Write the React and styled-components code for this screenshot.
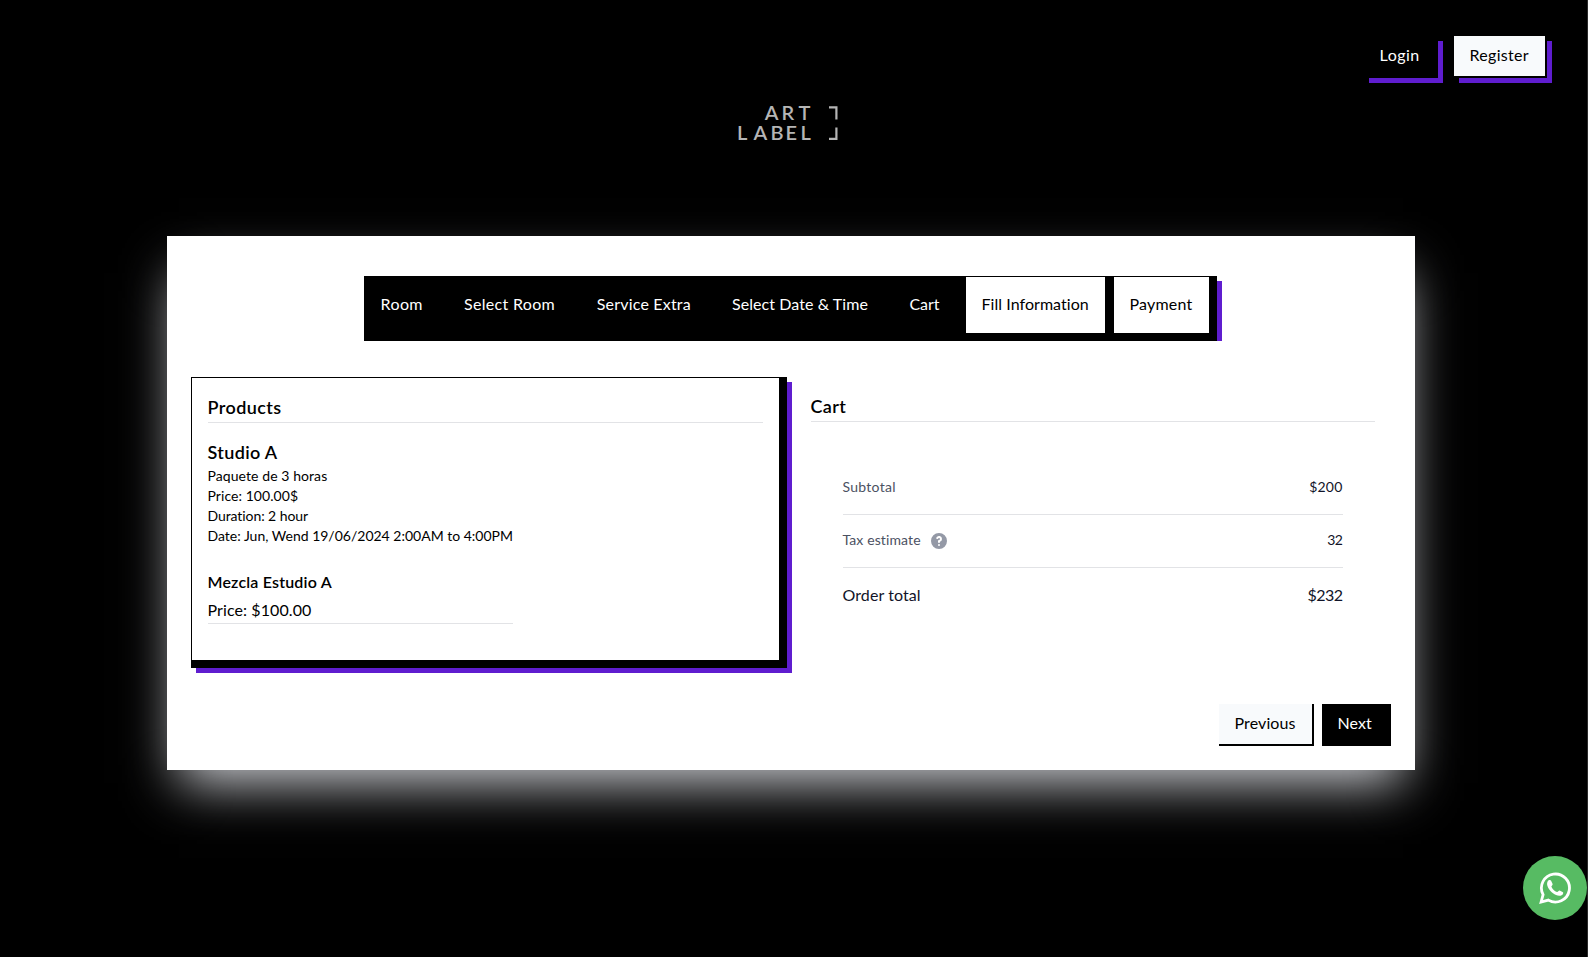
import React from "react";
import styled, { createGlobalStyle, css } from "styled-components";

const purple = "#5f1dcf";
const line = "#e2e3e6";

const GlobalStyle = createGlobalStyle`
  *, *::before, *::after { box-sizing: border-box; }
  body { margin: 0; background: #000; }
  h2, h3, h4, p, dl, dt, dd { margin: 0; font-weight: 400; }
`;

const Page = styled.div`
  height: 957px;
  overflow: hidden;
  background: #000;
  border-right: 1px solid #2b2b2b;
  color: #000;
  font: 400 16px/24px Lato, "Liberation Sans", sans-serif;
`;

const Text = styled.span`
  display: block;
  margin: -1px 0 0 -0.5px;
  padding-bottom: 1px;
  letter-spacing: ${(p) => p.$track || 0}px;
  white-space: nowrap;
`;

const Header = styled.header`
  display: flex;
  justify-content: flex-end;
  gap: 16px;
  padding: 36px 40px 0 0;
`;

const Button = styled.button`
  width: ${(p) => p.$width}px;
  height: 42px;
  padding: 8px 0 8px 16px;
  border: 0 solid #000;
  border-width: 0 2px 2px 0;
  background: ${(p) => (p.$dark ? "#000" : "#f8fafc")};
  color: ${(p) => (p.$dark ? "#fff" : "#000")};
  font: inherit;
  text-align: left;
  ${(p) => p.$raised && css`box-shadow: 5px 5px 0 ${purple};`}
`;

const Logo = styled.svg`
  display: block;
  width: 104px;
  height: 52px;
  margin: 20px 0 0 736px;
  fill: #b5b5b5;
  font-family: Lato, sans-serif;
  font-size: 20px;
  font-weight: 600;
`;

const Card = styled.main`
  width: 1248px;
  height: 534px;
  margin: 86px 0 0 167px;
  padding: 40px 24px 24px;
  background: #fff;
  box-shadow: 0 25px 50px -12px #cfd1d6;
`;

const StepperFrame = styled.div`
  width: 858px;
  margin-left: 173px;
  padding-right: 5px;
  overflow: hidden;
`;

const Stepper = styled.nav`
  display: flex;
  height: 65px;
  border: 1px solid #000;
  border-width: 1px 8px 8px 1px;
  background: #000;
  box-shadow: 5px 5px 0 ${purple};
`;

const Step = styled.div`
  width: ${(p) => p.$width}px;
  padding: 16px 0 16px 16px;
  border-right: 9px solid #000;
  background: ${(p) => (p.$pending ? "#fff" : "#000")};
  color: ${(p) => (p.$pending ? "#000" : "#fff")};
  &:last-child { border-right: 0; }
`;

const Columns = styled.div`
  display: flex;
  gap: 24px;
  margin-top: 36px;
`;

const Products = styled.section`
  width: 596px;
  height: 291px;
  padding: 16px;
  border: 1px solid #000;
  border-width: 1px 8px 8px 1px;
  box-shadow: 5px 5px 0 ${purple};
`;

const SectionTitle = styled.h2`
  border-bottom: 1px solid ${line};
  font-size: 18px;
  font-weight: 600;
  line-height: 28px;
`;

const Item = styled.article`
  width: 305px;
  margin-top: 16px;
  border-bottom: 1px solid ${line};
`;

const ItemName = styled.h3`
  font-size: 18px;
  font-weight: 600;
  line-height: 28px;
`;

const Detail = styled.p`
  font-size: 14px;
  line-height: 20px;
`;

const ExtraName = styled.h4`
  margin: 24px 0 4px;
  font-weight: 600;
`;

const Cart = styled.section`
  width: 564px;
  padding-top: 16px;
`;

const Summary = styled.dl`
  margin: 56px 32px 0;
`;

const SummaryRow = styled.div`
  display: flex;
  justify-content: space-between;
  align-items: center;
  margin-bottom: 16px;
  color: #111428;
  font-size: ${(p) => (p.$total ? 16 : 14)}px;
  line-height: ${(p) => (p.$total ? 24 : 20)}px;
  & + & { padding-top: 16px; border-top: 1px solid ${line}; }
`;

const Term = styled.dt`
  display: flex;
  gap: 8px;
  color: ${(p) => (p.$strong ? "inherit" : "#4b5162")};
`;

const Amount = styled.dd`
  padding-right: 0.5px;
`;

const HelpIcon = styled.svg`
  width: 20px;
  height: 20px;
  fill: #9499a6;
`;

const Actions = styled.footer`
  display: flex;
  justify-content: flex-end;
  gap: 8px;
  margin-top: 36px;
`;

const Chat = styled.a`
  position: fixed;
  right: 1px;
  bottom: 37px;
  display: flex;
  align-items: center;
  justify-content: center;
  width: 64px;
  height: 64px;
  border-radius: 50%;
  background: #57bb63;
`;

const ChatIcon = styled.svg`
  width: 32px;
  height: 32px;
`;

const steps = [
  { label: "Room", width: 83.5, track: 0.4 },
  { label: "Select Room", width: 132.8, track: 0.32 },
  { label: "Service Extra", width: 135.2, track: 0.19 },
  { label: "Select Date & Time", width: 177.5, track: 0.07 },
  { label: "Cart", width: 72, track: -0.05 },
  { label: "Fill Information", width: 148, track: 0.05, pending: true },
  { label: "Payment", width: 95, track: 0.2, pending: true },
];

const details = [
  ["Paquete de 3 horas", 0.08],
  ["Price: 100.00$", 0.06],
  ["Duration: 2 hour", -0.08],
  ["Date: Jun, Wend 19/06/2024 2:00AM to 4:00PM", 0],
];

export default function App() {
  return (
    <Page>
      <GlobalStyle />
      <Header>
        <Button $width={74} $dark $raised><Text $track={0.5}>Login</Text></Button>
        <Button $width={93} $raised><Text $track={0.3}>Register</Text></Button>
      </Header>
      <Logo viewBox="0 -6 104 52" aria-label="Art Label">
        <text y="16.2" x="28.8 45.4 62.5">ART</text>
        <text y="36" x="0.9 17.5 34.5 49.5 64.5">LABEL</text>
        <path d="M93 2.2h8.5v13.3h-2.2V4.6H93zM99.3 23.5h2.2V36H93v-2.3h6.3z" />
      </Logo>
      <Card>
        <StepperFrame>
          <Stepper>
            {steps.map((s) => (
              <Step key={s.label} $width={s.width} $pending={s.pending}>
                <Text $track={s.track}>{s.label}</Text>
              </Step>
            ))}
          </Stepper>
        </StepperFrame>
        <Columns>
          <Products>
            <SectionTitle><Text $track={0.4}>Products</Text></SectionTitle>
            <Item>
              <ItemName><Text $track={0.35}>Studio A</Text></ItemName>
              {details.map(([label, track]) => (
                <Detail key={label}><Text $track={track}>{label}</Text></Detail>
              ))}
              <ExtraName><Text $track={0.18}>Mezcla Estudio A</Text></ExtraName>
              <Text as="p" $track={0.09}>Price: $100.00</Text>
            </Item>
          </Products>
          <Cart>
            <SectionTitle><Text $track={0.35}>Cart</Text></SectionTitle>
            <Summary>
              <SummaryRow>
                <Term><Text $track={0.27}>Subtotal</Text></Term>
                <Amount><Text $track={0.2}>$200</Text></Amount>
              </SummaryRow>
              <SummaryRow>
                <Term>
                  <Text $track={0.12}>Tax estimate</Text>
                  <HelpIcon viewBox="0 0 20 20">
                    <path
                      fillRule="evenodd"
                      clipRule="evenodd"
                      d="M18 10a8 8 0 11-16 0 8 8 0 0116 0zm-8-3a1 1 0 00-.867.5 1 1 0 11-1.731-1A3 3 0 0113 8a3.001 3.001 0 01-2 2.83V11a1 1 0 11-2 0v-1a1 1 0 011-1 1 1 0 100-2zm0 8a1 1 0 100-2 1 1 0 000 2z"
                    />
                  </HelpIcon>
                </Term>
                <Amount><Text $track={-0.5}>32</Text></Amount>
              </SummaryRow>
              <SummaryRow $total>
                <Term $strong><Text $track={0.09}>Order total</Text></Term>
                <Amount><Text $track={-0.5}>$232</Text></Amount>
              </SummaryRow>
            </Summary>
          </Cart>
        </Columns>
        <Actions>
          <Button $width={95}><Text $track={0.1}>Previous</Text></Button>
          <Button $width={69} $dark><Text $track={0.07}>Next</Text></Button>
        </Actions>
      </Card>
      <Chat aria-label="WhatsApp">
        <ChatIcon viewBox="0 0 32 32">
          <path
            d="M2.1 30l2-7.4A14 14 0 1 1 9.4 28.1z"
            fill="none"
            stroke="#fff"
            strokeWidth="2.8"
          />
          <path
            d="M8.6 9.5C9.6 7.6 11.4 7.6 12 8.6l1.6 3.3c.4.9-1.4 2.1-1.2 2.8 1.1 2.6 3.1 4.3 5.6 5.3.8.2 1.8-1.7 2.6-1.5l3.4 1.7c.6.6 0 2.4-1.4 3.1-2.6 1.3-6.1-.1-8.6-2C10.800 18.800 6.600 13.500 8.600 9.500z"
            fill="#fff"
          />
        </ChatIcon>
      </Chat>
    </Page>
  );
}
